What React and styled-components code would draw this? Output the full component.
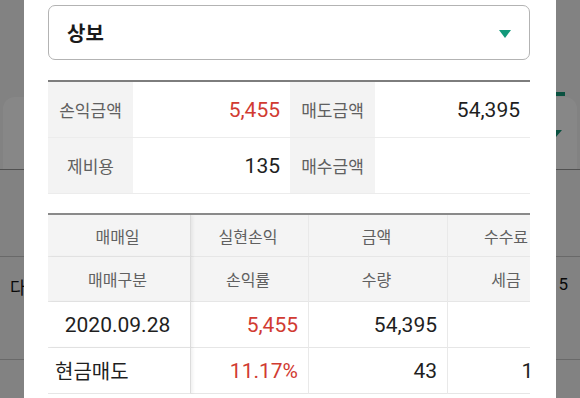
import React from 'react';
import styled, { createGlobalStyle } from 'styled-components';

const GlobalStyle = createGlobalStyle`
  * { box-sizing: border-box; }
  body {
    margin: 0;
    background: #7e7e7e;
    font-family: Roboto, "Noto Sans CJK KR", sans-serif;
  }
`;

const Screen = styled.div`
  position: relative;
  width: 580px;
  height: 398px;
  overflow: hidden;
  font-family: Roboto, "Noto Sans CJK KR", sans-serif;
`;

// page behind the dimmed dialog
const BackPage = styled.div`
  display: flex;
  flex-direction: column;
  height: 100%;
  background: #f6f6f6;
`;

const TopArea = styled.div`
  height: 100px;
  display: flex;
  align-items: flex-end;
  justify-content: flex-end;
  padding: 0 15px 1px 0;
`;

const GreenBar = styled.div`
  width: 14px;
  height: 4px;
  background: #13997a;
`;

const Card = styled.div`
  height: 73px;
  margin: 0 3px;
  background: #fff;
  border-radius: 12px 12px 0 0;
  display: flex;
  align-items: center;
  justify-content: flex-end;
  padding-right: 15px;
`;

const DropArrow = styled.div`
  width: 0;
  height: 0;
  border-left: 6px solid transparent;
  border-right: 6px solid transparent;
  border-top: 7px solid #13997a;
`;

const BackRow = styled.div`
  height: ${p => p.$h}px;
  border-top: 1px solid ${p => p.$line};
  display: flex;
  justify-content: space-between;
  align-items: flex-start;
  padding: 17px 12px 0 10px;
  font-size: 17px;
  color: #111;
`;

const Overlay = styled.div`
  position: absolute;
  inset: 0;
  background: rgba(0, 0, 0, 0.47);
`;

const Dialog = styled.div`
  position: absolute;
  top: 0;
  bottom: 0;
  left: 24px;
  width: 532px;
  background: #fff;
  padding: 5px 26px 0 24px;
  display: flex;
  flex-direction: column;
`;

const Select = styled.div`
  height: 55px;
  border: 1.5px solid #b3b3b3;
  border-radius: 7px;
  display: flex;
  align-items: center;
  justify-content: space-between;
  padding: 0 18px 0 18px;
  font-size: 20px;
  font-weight: 700;
  color: #1a1a1a;
`;

const SelectArrow = styled.div`
  width: 0;
  height: 0;
  border-left: 6.5px solid transparent;
  border-right: 6.5px solid transparent;
  border-top: 8px solid #12997a;
  margin-top: 2px;
`;

const Summary = styled.div`
  margin-top: 20px;
  border-top: 2px solid #7d7d7d;
  display: grid;
  grid-template-columns: 85px 157px 85px 155px;
  grid-auto-rows: 56px;
`;

const SumLabel = styled.div`
  background: #f3f3f3;
  display: flex;
  align-items: center;
  justify-content: center;
  font-size: 17px;
  color: #606060;
  border-bottom: 1px solid #ececec;
`;

const SumValue = styled.div`
  display: flex;
  align-items: center;
  justify-content: flex-end;
  padding-right: 10px;
  font-size: 21px;
  color: ${p => (p.$red ? '#d13b32' : '#1f1f1f')};
  border-bottom: 1px solid #ececec;
`;

const TableClip = styled.div`
  margin-top: 19px;
  width: 482px;
  overflow: hidden;
  border-top: 2px solid #8a8a8a;
`;

const Grid = styled.div`
  width: 520px;
  display: grid;
  grid-template-columns: 143px 118px 139px 120px;
  grid-template-rows: 42px 45px 46px 46px;
`;

const Cell = styled.div`
  display: flex;
  align-items: center;
  justify-content: ${p => p.$align || 'flex-end'};
  padding: 0 10px 0 7px;
  background: ${p => (p.$head ? '#f4f4f4' : '#fff')};
  border-bottom: 1px solid #e6e6e6;
  border-right: 1px solid ${p => (p.$fixed ? '#dcdcdc' : '#e9e9e9')};
  box-shadow: ${p => (p.$fixed ? '2px 0 3px rgba(0,0,0,0.06)' : 'none')};
  position: relative;
  z-index: ${p => (p.$fixed ? 1 : 0)};
  font-size: ${p => (p.$head ? '16px' : '21px')};
  color: ${p => (p.$head ? '#606060' : p.$red ? '#d13b32' : '#1f1f1f')};
  white-space: nowrap;
`;

const Korean = styled.span`
  font-size: 20px;
`;

export default function App() {
  return (
    <Screen>
      <GlobalStyle />
      <BackPage>
        <TopArea>
          <GreenBar />
        </TopArea>
        <Card>
          <DropArrow />
        </Card>
        <BackRow $h={89} $line="#9a9a9a" />
        <BackRow $h={105} $line="#c6c6c6">
          <span>다</span>
          <span>5</span>
        </BackRow>
        <BackRow $h={40} $line="#c6c6c6" />
      </BackPage>
      <Overlay />
      <Dialog>
        <Select>
          <span>상보</span>
          <SelectArrow />
        </Select>

        <Summary>
          <SumLabel>손익금액</SumLabel>
          <SumValue $red>5,455</SumValue>
          <SumLabel>매도금액</SumLabel>
          <SumValue>54,395</SumValue>
          <SumLabel>제비용</SumLabel>
          <SumValue>135</SumValue>
          <SumLabel>매수금액</SumLabel>
          <SumValue></SumValue>
        </Summary>

        <TableClip>
          <Grid>
            <Cell $head $fixed $align="center">매매일</Cell>
            <Cell $head $align="center">실현손익</Cell>
            <Cell $head $align="center">금액</Cell>
            <Cell $head $align="center">수수료</Cell>

            <Cell $head $fixed $align="center">매매구분</Cell>
            <Cell $head $align="center">손익률</Cell>
            <Cell $head $align="center">수량</Cell>
            <Cell $head $align="center">세금</Cell>

            <Cell $fixed $align="center">2020.09.28</Cell>
            <Cell $red>5,455</Cell>
            <Cell>54,395</Cell>
            <Cell></Cell>

            <Cell $fixed $align="flex-start"><Korean>현금매도</Korean></Cell>
            <Cell $red>11.17%</Cell>
            <Cell>43</Cell>
            <Cell>163</Cell>
          </Grid>
        </TableClip>
      </Dialog>
    </Screen>
  );
}
